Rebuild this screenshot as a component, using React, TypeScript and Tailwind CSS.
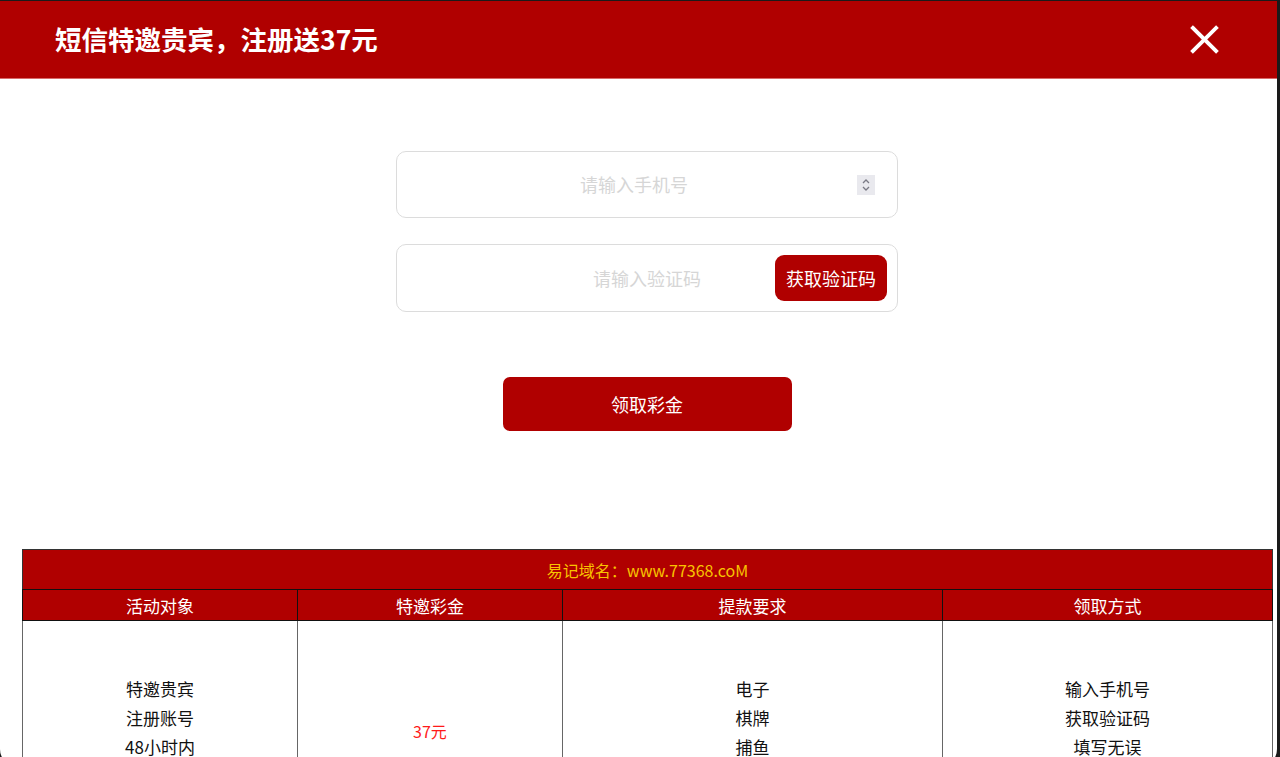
const font = { fontFamily: '"Noto Sans CJK SC", "Noto Sans", sans-serif' };

const columns = [
  { title: "活动对象", width: "w-[275px]", lines: ["特邀贵宾", "注册账号", "48小时内", "完成领取"] },
  { title: "特邀彩金", width: "w-[265px]", lines: ["37元"], red: true },
  { title: "提款要求", width: "w-[380px]", lines: ["电子", "棋牌", "捕鱼", "一倍流水"] },
  { title: "领取方式", width: "w-[330px]", lines: ["输入手机号", "获取验证码", "填写无误", "即可领取"] },
];

function Spinner() {
  return (
    <div className="flex h-[20px] w-[18px] items-center justify-center bg-[#e9e9ee]">
      <svg width="10" height="14" viewBox="0 0 10 14" fill="none" stroke="#7a7a85" strokeWidth="1.3">
        <path d="M2 5 L5 2 L8 5" />
        <path d="M2 9 L5 12 L8 9" />
      </svg>
    </div>
  );
}

export default function App() {
  return (
    <div className="h-[757px] w-full overflow-hidden bg-[#1a1a1a] pt-[1px]" style={font}>
      <div className="flex h-[766px] w-[1277px] flex-col overflow-hidden rounded-b-[18px] bg-white">
        <header className="flex h-[78px] shrink-0 items-center justify-between border-b border-[#d86a6a] bg-[#b00000] pl-[55px] pr-[57px]">
          <h1 className="text-[26.5px] font-bold leading-none text-white">短信特邀贵宾，注册送37元</h1>
          <button className="flex h-[32px] w-[32px] items-center justify-center">
            <svg width="29" height="29" viewBox="0 0 30 30" stroke="white" strokeWidth="4" strokeLinecap="square">
              <path d="M3 3 L27 27" />
              <path d="M27 3 L3 27" />
            </svg>
          </button>
        </header>

        <div className="flex flex-col items-center pl-[17px] pt-[72px]">
          <div className="flex h-[67px] w-[502px] items-center rounded-[10px] border border-[#dcdcdc] pl-[14px] pr-[22px]">
            <input
              className="flex-1 bg-transparent text-center text-[18px] text-[#333] outline-none placeholder:text-[#d6d6d6]"
              placeholder="请输入手机号"
            />
            <Spinner />
          </div>

          <div className="relative mt-[26px] h-[68px] w-[502px] rounded-[10px] border border-[#dcdcdc]">
            <input
              className="h-full w-full bg-transparent text-center text-[18px] text-[#333] outline-none placeholder:text-[#d6d6d6]"
              placeholder="请输入验证码"
            />
            <button className="absolute right-[10px] top-[10px] h-[46px] w-[112px] rounded-[9px] bg-[#b00000] text-[18px] text-white">
              获取验证码
            </button>
          </div>

          <button className="mt-[65px] h-[54px] w-[289px] rounded-[7px] bg-[#b00000] text-[18px] text-white">
            领取彩金
          </button>
        </div>

        <table className="ml-[22px] mt-[118px] w-[1251px] border-collapse border border-[#333] text-[17px]">
          <thead>
            <tr className="h-[40px] bg-[#b00000]">
              <th colSpan={4} className="border border-b-[#111] border-[#333] text-[16px] font-normal leading-none text-[#f8c300]">
                易记域名：www.77368.coM
              </th>
            </tr>
            <tr className="h-[31px] bg-[#b00000]">
              {columns.map((c) => (
                <th key={c.title} className={`${c.width} border border-[#111] p-0 font-normal leading-none text-white`}>
                  {c.title}
                </th>
              ))}
            </tr>
          </thead>
          <tbody>
            <tr className="h-[222px]">
              {columns.map((c) => (
                <td key={c.title} className="border border-[#666] text-center align-middle">
                  {c.lines.map((l) => (
                    <div key={l} className={`leading-[29px] ${c.red ? "text-[16px] text-[#ff1a1a]" : "text-[#111]"}`}>
                      {l}
                    </div>
                  ))}
                </td>
              ))}
            </tr>
          </tbody>
        </table>
      </div>
    </div>
  );
}
